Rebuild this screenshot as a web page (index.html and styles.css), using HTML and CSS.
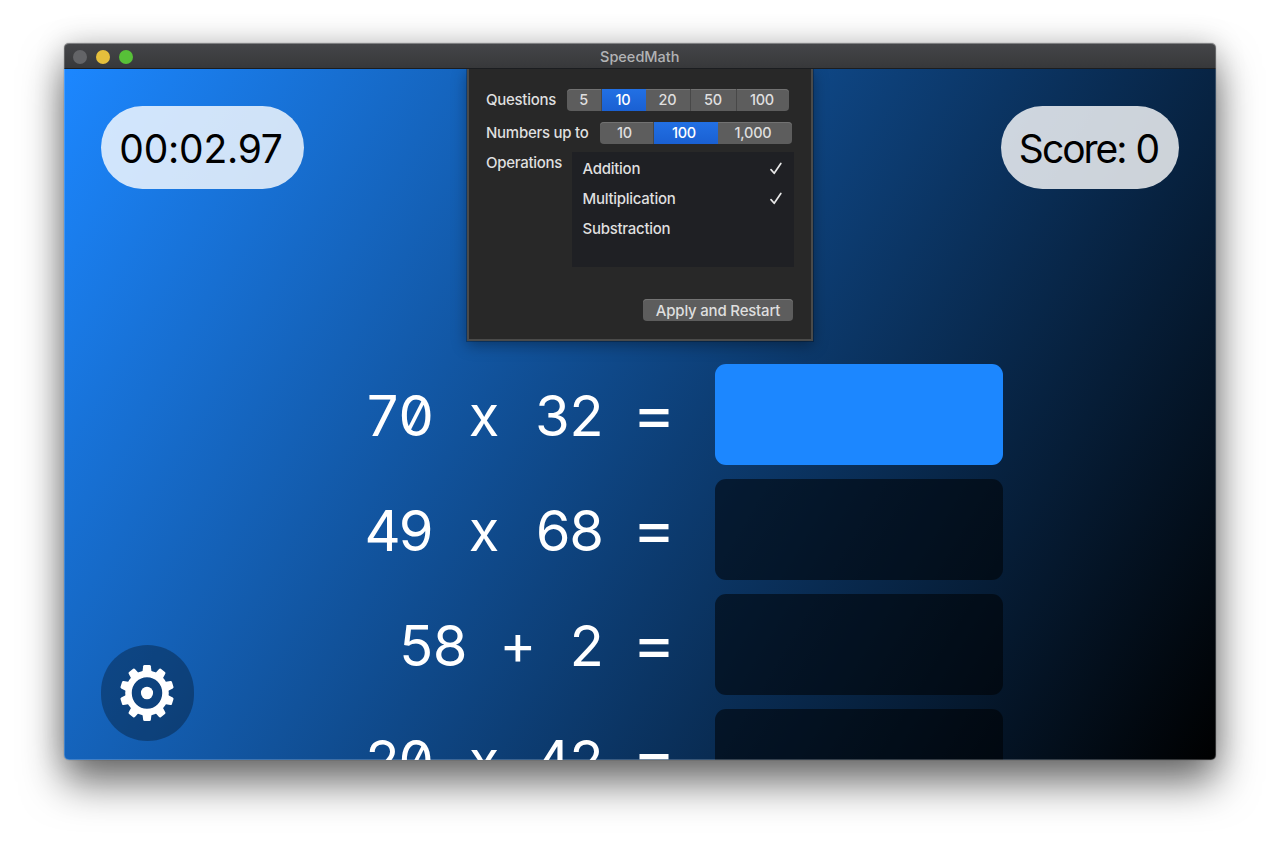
FILE: index.html
```html
<!DOCTYPE html>
<html lang="en">
<head>
<meta charset="utf-8">
<title>SpeedMath</title>
<link rel="stylesheet" href="styles.css">
</head>
<body>
<div class="window">
  <header class="titlebar">
    <div class="lights"><i class="light"></i><i class="light yellow"></i><i class="light green"></i></div>
    <div class="title">SpeedMath</div>
  </header>
  <main class="game">
    <div class="top">
      <div class="pill timer"><span>00:02.97</span></div>
      <div class="pill score"><span>Score: 0</span></div>
    </div>
    <div class="questions">
      <div class="row"><div class="expr"><span class="num">70</span><span class="op">x</span><span class="num">32</span><span class="op eq">=</span></div><div class="answer active"></div></div>
      <div class="row"><div class="expr"><span class="num">49</span><span class="op">x</span><span class="num">68</span><span class="op eq">=</span></div><div class="answer"></div></div>
      <div class="row"><div class="expr"><span class="num">58</span><span class="op plus">+</span><span class="num single">2</span><span class="op eq">=</span></div><div class="answer"></div></div>
      <div class="row"><div class="expr"><span class="num">20</span><span class="op">x</span><span class="num">42</span><span class="op eq">=</span></div><div class="answer"></div></div>
    </div>
    <div class="settings">
      <svg width="54" height="56" viewBox="-28 -28 56 56" preserveAspectRatio="none">
        <g fill="#fff">
          <circle r="6.3"/>
          <path id="t" d="M-5-19 L-4-26.8 Q-3.8-28 -2.6-28 L2.6-28 Q3.8-28 4-26.8 L5-19Z"/>
          <use href="#t" transform="rotate(36)"/><use href="#t" transform="rotate(72)"/><use href="#t" transform="rotate(108)"/><use href="#t" transform="rotate(144)"/><use href="#t" transform="rotate(180)"/><use href="#t" transform="rotate(216)"/><use href="#t" transform="rotate(252)"/><use href="#t" transform="rotate(288)"/><use href="#t" transform="rotate(324)"/>
        </g>
        <circle r="19.2" fill="none" stroke="#fff" stroke-width="6.8"/>
      </svg>
    </div>
    <section class="sheet">
      <div class="line"><span class="label">Questions</span>
        <div class="seg questions-seg"><span>5</span><span class="on">10</span><span>20</span><span>50</span><span>100</span></div></div>
      <div class="line second"><span class="label">Numbers up to</span>
        <div class="seg numbers-seg"><span>10</span><span class="on">100</span><span>1,000</span></div></div>
      <div class="line ops"><span class="label">Operations</span>
        <div class="list">
          <div class="item"><span>Addition</span><svg class="check" width="12" height="13" viewBox="0 0 12 13"><path d="M1 7.6 4.2 11.3 10.8 1.5"/></svg></div>
          <div class="item"><span>Multiplication</span><svg class="check" width="12" height="13" viewBox="0 0 12 13"><path d="M1 7.6 4.2 11.3 10.8 1.5"/></svg></div>
          <div class="item"><span>Substraction</span></div>
        </div></div>
      <div class="apply">Apply and Restart</div>
    </section>
  </main>
</div>
</body>
</html>
```
FILE: styles.css
```css
* { box-sizing: border-box; }
body { margin: 0; padding: 43px 64px 0; height: 845px; overflow: hidden; background: #fff; font-family: Inter, "Liberation Sans", sans-serif; }
.window { position: relative; height: 717px; border-radius: 5px; overflow: visible; box-shadow: 0 23px 42px rgba(0,0,0,.56), 0 0 30px rgba(0,0,0,.17), 0 0 1px rgba(0,0,0,.6); }
.window::after { content: ""; position: absolute; inset: 0; border-radius: 5px; border: 1px solid rgba(255,255,255,.2); border-top-color: rgba(255,255,255,.32); pointer-events: none; }
.titlebar { height: 26px; display: grid; grid-template-columns: 1fr auto 1fr; align-items: center; padding: 2px 9.5px 0 9px; background: linear-gradient(#454649, #37383a); border-bottom: 1px solid #1b1d20; border-radius: 5px 5px 0 0; }
.lights { display: flex; gap: 9px; }
.light { width: 14px; height: 14px; border-radius: 50%; background: #636467; }
.yellow { background: #e5bf3c; }
.green { background: #57c038; }
.title { font-size: 14.5px; line-height: 20px; color: #b2b3b5; font-weight: 500; letter-spacing: 0; }
.game { position: relative; height: 691px; overflow: hidden; border-radius: 0 0 5px 5px; background: linear-gradient(121deg, #1c87ff, #000); }
.top { height: 295px; padding: 37px 37px 0; display: flex; justify-content: space-between; align-items: flex-start; }
.pill { height: 83px; border-radius: 42px; background: rgba(255,255,255,.8); color: #000; font-size: 39px; display: flex; align-items: center; justify-content: center; white-space: nowrap; padding-top: 1px; }
.timer { width: 203px; letter-spacing: -.25px; padding-right: 3px; }
.score { width: 178px; letter-spacing: -2px; padding-right: 3px; word-spacing: 1px; }
.questions { display: flex; flex-direction: column; gap: 14px; padding-right: 213px; }
.row { display: flex; justify-content: flex-end; align-items: center; gap: 44px; }
.expr { display: flex; gap: 33.8px; color: #fff; font-size: 56px; line-height: 101px; height: 101px; padding-top: 2px; font-feature-settings: "tnum", "zero"; }
.num { width: 67.6px; display: flex; justify-content: center; letter-spacing: -2.8px; padding-right: 5px; }
.num:nth-child(3) { padding-right: 2px; }
.num.single { width: 33.8px; }
.op { width: 33.8px; display: flex; justify-content: center; padding-right: 2px; }
.op.plus { transform: translateY(-2px); }
.op.eq { padding-right: 0; transform: translateY(-2px) scaleX(1.13); font-weight: 500; }
.answer { width: 288px; height: 101px; border-radius: 11px; background: rgba(0,0,0,.53); }
.answer.active { background: #1c87ff; }
.settings { position: absolute; left: 37px; bottom: 19px; width: 93px; height: 96px; border-radius: 47px; background: rgba(0,0,0,.3); display: flex; align-items: center; justify-content: center; padding-right: 1px; }
.sheet { position: absolute; top: 0; left: 403px; width: 346px; height: 272px; padding: 19px 17px 0 17px; background: #282828; border: 1px solid #4a4a49; border-top: 0; border-width: 0 2px 2px; box-shadow: 0 0 0 1px rgba(0,0,0,.25), 0 4px 14px rgba(0,0,0,.35); color: #dfdfdf; font-size: 15px; font-weight: 500; letter-spacing: -.27px; }
.line { display: flex; align-items: center; height: 23px; white-space: nowrap; }
.second { margin-top: 10px; }
.seg { display: flex; height: 22px; border-radius: 4px; overflow: hidden; background: #5d5d5d; box-shadow: inset 0 1px #727272; }
.line .label { width: 81px; }
.second .label { width: 114px; }
.seg span { display: flex; align-items: center; justify-content: center; border-right: 1px solid #484848; font-size: 14.5px; padding-right: 1px; }
.seg span:last-child, .seg .on { border-right: 0; }
.seg .on { background: linear-gradient(#2270e4, #1a60d2); color: #fff; padding-right: 2px; }
.seg span:last-child { padding-right: 2px; }
.numbers-seg span, .numbers-seg .on, .numbers-seg span:last-child { padding-right: 4px; }
.questions-seg { display: grid; grid-template-columns: 35px 44px 45px 46px 52px; }
.numbers-seg { display: grid; grid-template-columns: 54px 64px 74px; }
.ops { align-items: flex-start; height: 116px; margin-top: 8px; }
.ops .label { width: 86px; padding-top: 1px; }
.list { width: 222px; height: 115px; background: #1f2024; padding: 1px 11px 0 10.5px; }
.item { display: flex; justify-content: space-between; align-items: center; height: 30px; }
.check { fill: none; stroke: #e6e6e6; stroke-width: 1.7; stroke-linecap: round; stroke-linejoin: round; margin-right: 1px; }
.apply { width: 150px; height: 22px; margin: 31px 0 0 157px; border-radius: 4px; background: #5d5d5d; box-shadow: inset 0 1px #747474; display: flex; align-items: center; justify-content: center; white-space: nowrap; letter-spacing: -.2px; }
```
